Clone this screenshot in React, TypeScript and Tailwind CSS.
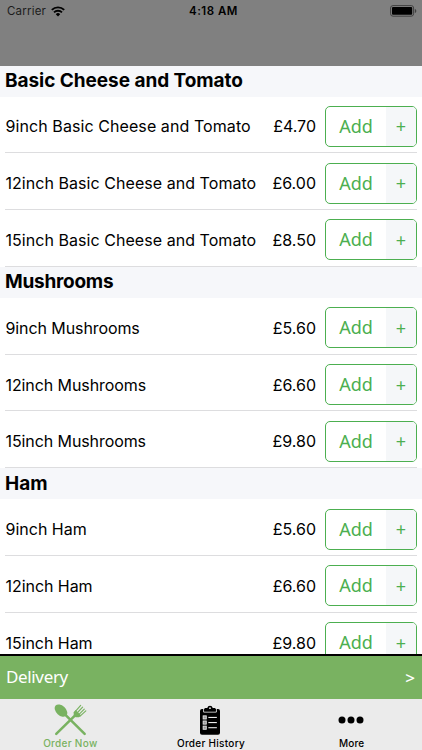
import React from 'react';

interface MenuItem {
  name: string;
  price: string;
  tracking: string;
}

interface MenuSection {
  title: string;
  tracking: string;
  items: MenuItem[];
}

const SECTIONS: MenuSection[] = [
  {
    title: 'Basic Cheese and Tomato',
    tracking: 'tracking-[-0.05px]',
    items: [
      { name: '9inch Basic Cheese and Tomato', price: '£4.70', tracking: 'tracking-[0.08px]' },
      { name: '12inch Basic Cheese and Tomato', price: '£6.00', tracking: 'tracking-[0.05px]' },
      { name: '15inch Basic Cheese and Tomato', price: '£8.50', tracking: 'tracking-[0.05px]' },
    ],
  },
  {
    title: 'Mushrooms',
    tracking: 'tracking-[-0.25px]',
    items: [
      { name: '9inch Mushrooms', price: '£5.60', tracking: 'tracking-[-0.09px]' },
      { name: '12inch Mushrooms', price: '£6.60', tracking: 'tracking-[-0.09px]' },
      { name: '15inch Mushrooms', price: '£9.80', tracking: 'tracking-[-0.09px]' },
    ],
  },
  {
    title: 'Ham',
    tracking: 'tracking-[0px]',
    items: [
      { name: '9inch Ham', price: '£5.60', tracking: 'tracking-[0px]' },
      { name: '12inch Ham', price: '£6.60', tracking: 'tracking-[-0.05px]' },
      { name: '15inch Ham', price: '£9.80', tracking: 'tracking-[-0.05px]' },
    ],
  },
];

const WifiIcon = () => (
  <svg width="14" height="11" viewBox="0 0 14 11" fill="none" stroke="#000" strokeWidth="1.9">
    <path d="M0.8 3.9a8.8 8.8 0 0 1 12.4 0" />
    <path d="M3 6.4a5.7 5.7 0 0 1 8 0" />
    <path d="M7 10.4 4.8 8.2a3.1 3.1 0 0 1 4.4 0z" fill="#000" stroke="none" />
  </svg>
);

const BatteryIcon = () => (
  <svg width="27" height="12" viewBox="0 0 27 12">
    <rect x="0.6" y="0.6" width="23" height="10.6" rx="2.4" fill="none" stroke="#404040" strokeWidth="1" />
    <rect x="2" y="2" width="20.2" height="7.8" rx="1" fill="#000" />
    <path d="M24.8 4v4c1-.3 1.5-1 1.5-2s-.5-1.7-1.5-2z" fill="#404040" />
  </svg>
);

const CutleryIcon = () => (
  <svg width="33" height="32" viewBox="0 0 34 33" fill="#79b261">
    <ellipse cx="7.2" cy="6.8" rx="7.6" ry="5" transform="rotate(43 7.2 6.8)" />
    <path d="M11 10.5 31.6 30.8" stroke="#79b261" strokeWidth="2.6" strokeLinecap="round" />
    <path d="M2.3 30.9 22 11.5" stroke="#79b261" strokeWidth="2.6" strokeLinecap="round" />
    <path d="M20.4 8.4c-.4 2.2 0 3.600.8 4.400s2.300 1.200 4.500.8l2-2-5.400-5.300z" />
    <path
      d="M21.400 8.400 27.500 1.500M23.300 9.800l6.200-6.500M25 11.500l6.200-6.200M26.600 12.800l6.200-5.700"
      stroke="#79b261"
      strokeWidth="1.2"
      strokeLinecap="round"
    />
  </svg>
);

const ClipboardIcon = () => (
  <svg width="20" height="30" viewBox="0.800 0 20.400 30.400" preserveAspectRatio="none">
    <rect x="0.8" y="4" width="20.4" height="26.2" rx="2" fill="#000" />
    <path d="M4.5 4v3.2h13V4" fill="none" stroke="#ebebeb" strokeWidth="0.9" />
    <path d="M5.2 6.400V4.2c0-.8.5-1.200 1.300-1.200h1.700a2.900 2.900 0 0 1 5.600 0h1.700c.8 0 1.300.4 1.300 1.200v2.200z" fill="#000" />
    <circle cx="11" cy="3.2" r="0.9" fill="#ebebeb" />
    {[11, 16.2, 21.4].map((y) => (
      <g key={y}>
        <rect x="4" y={y} width="3.2" height="3.2" fill="#999" stroke="#ebebeb" strokeWidth="0.9" />
        <path d={`M9.3 ${y + 1.6}h8.7`} stroke="#ebebeb" strokeWidth="1.1" />
      </g>
    ))}
  </svg>
);

const DotsIcon = () => (
  <svg width="26" height="8" viewBox="0 0 26 8">
    <circle cx="4" cy="4" r="3.5" />
    <circle cx="13" cy="4" r="3.5" />
    <circle cx="22" cy="4" r="3.5" />
  </svg>
);

const StatusBar = () => (
  <header className="h-[65.5px] shrink-0 bg-[#808080]">
    <div className="grid h-[22px] grid-cols-3 items-center pl-[7px] pr-[5px] text-[11.5px] text-black">
      <div className="flex items-center gap-[5px]">
        <span className="pt-px tracking-[0.2px] text-[#1c1c1c]">Carrier</span>
        <WifiIcon />
      </div>
      <span className="pl-[3px] pt-px text-center font-semibold tracking-[0.5px]">4:18 AM</span>
      <div className="flex justify-end">
        <BatteryIcon />
      </div>
    </div>
  </header>
);

const AddButton = () => (
  <button
    type="button"
    className="flex h-[41px] w-[92px] shrink-0 overflow-hidden rounded-[5px] border border-[#4caf50] font-['Noto_Sans','Open_Sans',sans-serif] text-[#4caf50]"
  >
    <span className="flex h-full w-[60px] items-center justify-center text-[18px]">Add</span>
    <span className="flex h-full flex-1 items-center justify-center bg-[#f5f7f9] pt-px text-[18px]">+</span>
  </button>
);

const MenuRow = ({ item }: { item: MenuItem }) => (
  <li className="mx-[5px] flex h-[56.8px] items-center border-b border-[#dddddf] pt-[4px]">
    <span className={`flex-1 whitespace-nowrap pl-[0.5px] ${item.tracking}`}>{item.name}</span>
    <span className="mr-[9px]">{item.price}</span>
    <AddButton />
  </li>
);

const App: React.FC = () => {
  return (
    <div className="flex h-[750px] w-[422px] flex-col overflow-hidden bg-white font-['Inter',sans-serif] text-black">
      <StatusBar />

      {/* Menu list */}
      <main className="min-h-0 flex-1 overflow-hidden text-[16px]">
        {SECTIONS.map((section) => (
          <section key={section.title}>
            <h2 className={`flex h-[31px] items-center bg-[#f6f7fa] pl-[5px] text-[19px] font-bold ${section.tracking}`}>
              {section.title}
            </h2>
            <ul>
              {section.items.map((item) => (
                <MenuRow key={item.name} item={item} />
              ))}
            </ul>
          </section>
        ))}
      </main>

      {/* Delivery bar */}
      <div className="flex h-[45px] shrink-0 items-center justify-between border-t-2 border-black bg-[#79b261] pl-[6px] pr-[7px] font-['Noto_Sans',sans-serif] text-[17px] text-white">
        <span className="pb-px tracking-[-0.35px]">Delivery</span>
        <span className="font-medium">&gt;</span>
      </div>

      {/* Tab bar */}
      <nav className="grid h-[51px] shrink-0 grid-cols-3 bg-[#ebebeb] text-[10px] font-medium">
        <a className="flex flex-col items-center text-[#79b261]">
          <span className="flex h-[37px] items-center pt-[5px]"><CutleryIcon /></span>
          <span className="tracking-[0.3px]">Order Now</span>
        </a>
        <a className="flex flex-col items-center">
          <span className="flex h-[37px] items-center pr-px pt-[5px]"><ClipboardIcon /></span>
          <span className="tracking-[0.28px]">Order History</span>
        </a>
        <a className="flex flex-col items-center">
          <span className="flex h-[37px] items-center pr-px pt-[4px]"><DotsIcon /></span>
          <span className="tracking-[0.2px]">More</span>
        </a>
      </nav>
    </div>
  );
};

export default App;
